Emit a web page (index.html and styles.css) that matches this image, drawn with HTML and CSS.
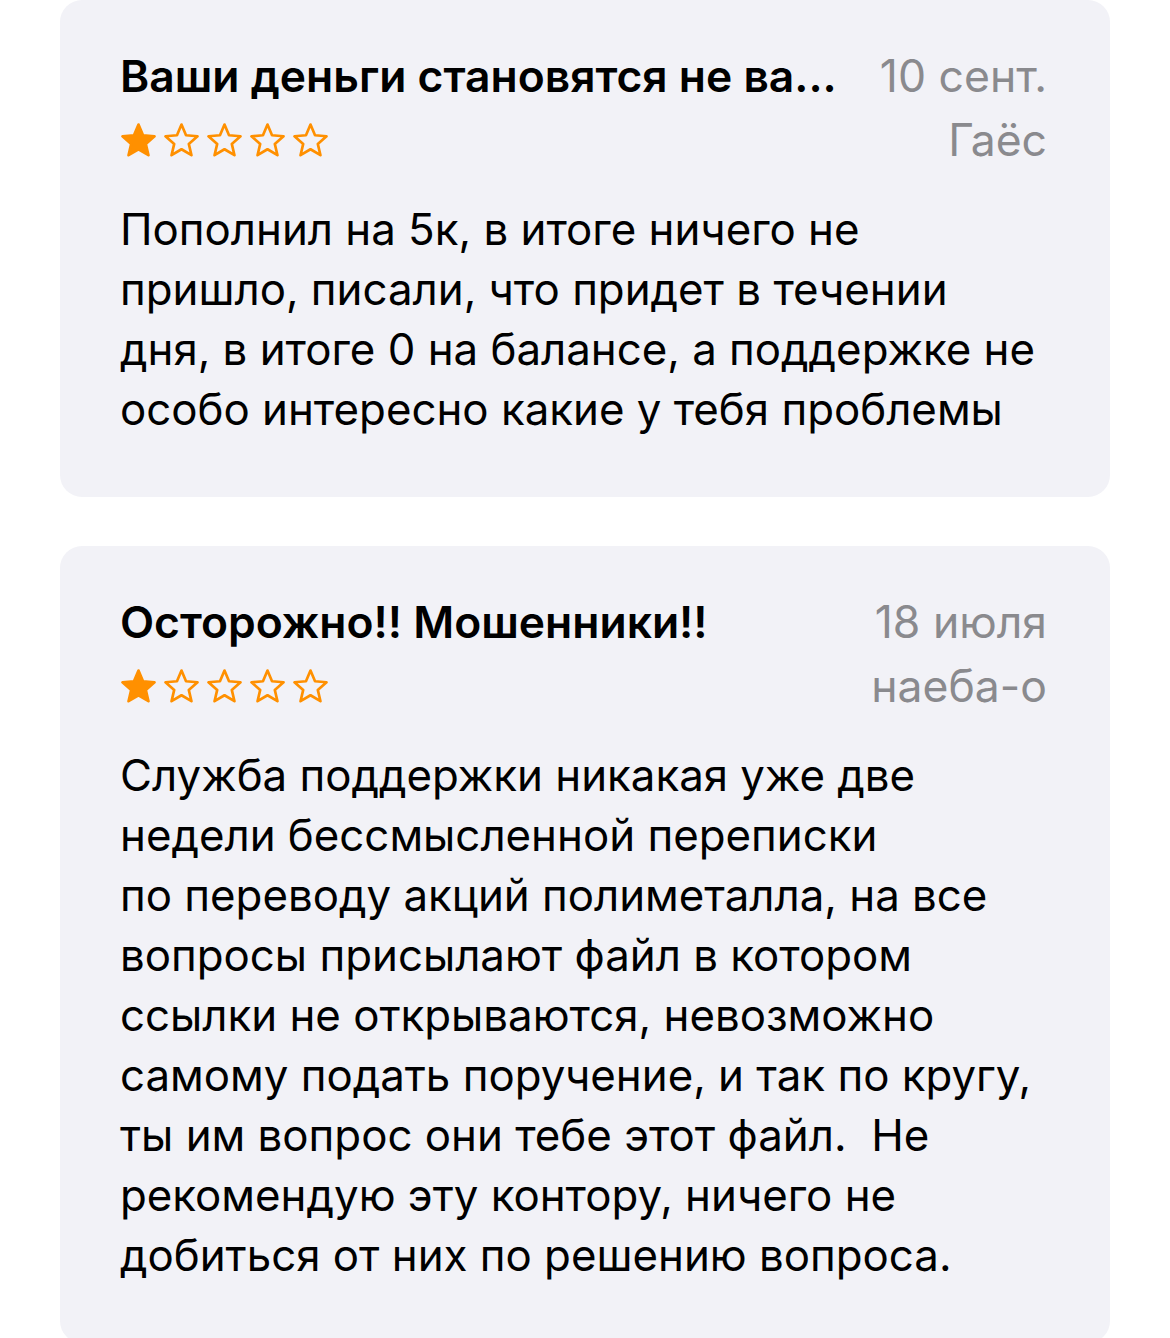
FILE: index.html
```html
<!DOCTYPE html>
<html lang="ru">
<head>
<meta charset="utf-8">
<link rel="stylesheet" href="styles.css">
</head>
<body>
<svg width="0" height="0" class="defs" aria-hidden="true">
  <defs>
    <path id="star" d="M18 2.5 L22.4 12.9 L33.6 13.9 L25.1 21.3 L27.7 32.3 L18 26.5 L8.3 32.3 L10.9 21.3 L2.4 13.9 L13.6 12.9 Z"/>
  </defs>
</svg>
<main class="list">
  <section class="card">
    <div class="row">
      <h2 class="title">Ваши деньги становятся не ва...</h2>
      <span class="meta">10 сент.</span>
    </div>
    <div class="row row2">
      <div class="stars">
        <svg class="star full" viewBox="0 0 36 36"><use href="#star"/></svg>
        <svg class="star" viewBox="0 0 36 36"><use href="#star"/></svg>
        <svg class="star" viewBox="0 0 36 36"><use href="#star"/></svg>
        <svg class="star" viewBox="0 0 36 36"><use href="#star"/></svg>
        <svg class="star" viewBox="0 0 36 36"><use href="#star"/></svg>
      </div>
      <span class="meta">Гаёс</span>
    </div>
    <p class="body">
      <span class="ln">Пополнил на 5к, в итоге ничего не</span>
      <span class="ln">пришло, писали, что придет в течении</span>
      <span class="ln">дня, в итоге 0 на балансе, а поддержке не</span>
      <span class="ln">особо интересно какие у тебя проблемы</span>
    </p>
  </section>
  <section class="card">
    <div class="row">
      <h2 class="title">Осторожно!! Мошенники!!</h2>
      <span class="meta">18 июля</span>
    </div>
    <div class="row row2">
      <div class="stars">
        <svg class="star full" viewBox="0 0 36 36"><use href="#star"/></svg>
        <svg class="star" viewBox="0 0 36 36"><use href="#star"/></svg>
        <svg class="star" viewBox="0 0 36 36"><use href="#star"/></svg>
        <svg class="star" viewBox="0 0 36 36"><use href="#star"/></svg>
        <svg class="star" viewBox="0 0 36 36"><use href="#star"/></svg>
      </div>
      <span class="meta">наеба-о</span>
    </div>
    <p class="body">
      <span class="ln">Служба поддержки никакая уже две</span>
      <span class="ln">недели бессмысленной переписки</span>
      <span class="ln">по переводу акций полиметалла, на все</span>
      <span class="ln">вопросы присылают файл в котором</span>
      <span class="ln">ссылки не открываются, невозможно</span>
      <span class="ln">самому подать поручение, и так по кругу,</span>
      <span class="ln">ты им вопрос они тебе этот файл.&nbsp; Не</span>
      <span class="ln">рекомендую эту контору, ничего не</span>
      <span class="ln">добиться от них по решению вопроса.</span>
    </p>
  </section>
</main>
</body>
</html>
```

FILE: styles.css
```css
html, body {
  margin: 0;
  padding: 0;
  background: #ffffff;
}
body {
  width: 1170px;
  height: 1338px;
  overflow: hidden;
  font-family: "Inter", "Noto Sans", "Liberation Sans", sans-serif;
  color: #000;
}
.defs {
  position: absolute;
  width: 0;
  height: 0;
}
.list {
  display: flex;
  flex-direction: column;
  gap: 49px;
  padding: 0 60px;
}
.card {
  background: #f2f2f7;
  border-radius: 22px;
  padding: 46px 63px 57px 60px;
}
.row {
  display: flex;
  justify-content: space-between;
  align-items: center;
  height: 60px;
}
.row2 {
  margin-top: 4px;
}
.title {
  margin: 0;
  font-size: 44.4px;
  font-weight: 600;
  line-height: 60px;
  white-space: nowrap;
}
.meta {
  font-size: 44.5px;
  line-height: 60px;
  color: #8a8a8e;
  white-space: nowrap;
}
.stars {
  display: flex;
  gap: 6px;
}
.star {
  width: 37px;
  height: 37px;
  fill: none;
  stroke: #ff9000;
  stroke-width: 2.6px;
  stroke-linejoin: round;
}
.star.full {
  fill: #ff9000;
}
.body {
  margin: 30px 0 0;
  font-size: 43.8px;
  line-height: 60px;
}
.ln {
  display: block;
  white-space: nowrap;
}
```
